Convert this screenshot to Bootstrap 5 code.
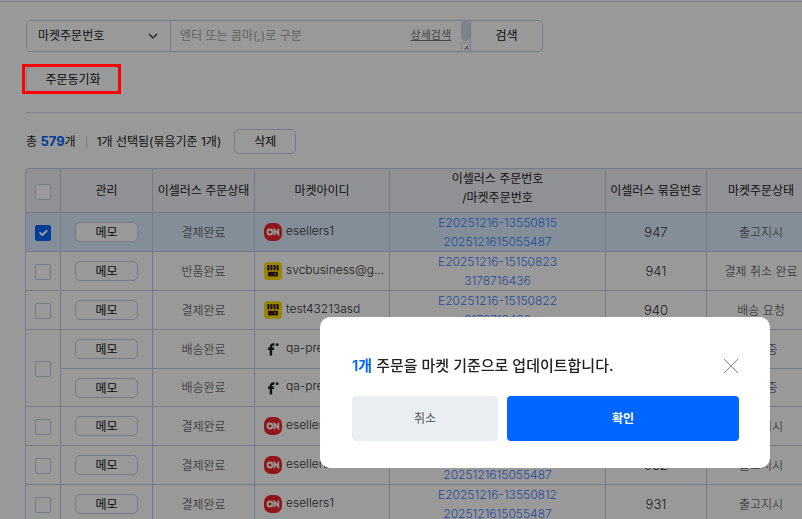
<!DOCTYPE html>
<html lang="ko">
<head>
<meta charset="utf-8">
<meta name="viewport" content="width=device-width, initial-scale=1">
<title>주문 관리</title>
<link href="https://cdn.jsdelivr.net/npm/bootstrap@5.3.0/dist/css/bootstrap.min.css" rel="stylesheet">
<style>
  :root { --line: #c3cddf; --ink: #222; --brand: #0066ff; }
  body { font-family: Inter, "Noto Sans CJK KR", sans-serif; font-size: 12px; line-height: 19px; color: var(--ink); background: #fff; }
  .top-rule { height: 2px; border-bottom: 1px solid var(--line); }
  .page { padding: 18px 0 0 26px; }
  .outline-btn { --bs-btn-font-size: 12px; --bs-btn-line-height: 18px; --bs-btn-padding-y: 0; --bs-btn-padding-x: 0; --bs-btn-color: #111; --bs-btn-bg: #fff; --bs-btn-border-color: var(--line); --bs-btn-border-radius: 5px; }

  .search-bar { width: 517px; height: 32px; border: 1px solid var(--line); border-radius: 5px; overflow: hidden; }
  .select-wrap { flex: 0 0 143px; }
  .search-bar .form-select { padding: 0 30px 0 11px; border: 0; border-radius: 0; font-size: 12px; color: var(--ink); background-image: none; }
  .select-wrap svg { position: absolute; right: 12px; top: 10px; pointer-events: none; }
  .query-wrap { border: solid var(--line); border-width: 0 1px; }
  .query-wrap textarea { height: 30px; padding: 5px 70px 5px 9px; border: 0; border-radius: 0; font-size: 12px; line-height: 19px; resize: none; overflow: hidden; }
  .query-wrap textarea::placeholder { color: #a6a6a6; }
  .detail-link { position: absolute; right: 19px; top: 5px; font-size: 11px; color: #777; }
  .scroll-thumb { position: absolute; right: 0; top: 0; width: 9px; height: 20px; border-radius: 4px; background: #cfdae8; }
  .grip { position: absolute; right: 0; bottom: 0; }
  .search-btn { flex: 0 0 71px; border: 0; border-radius: 0; }

  .sync-wrap { margin-top: 14px; }
  .sync-btn, .memo-btn { --bs-btn-line-height: 16px; display: block; padding-top: 2px; }
  .sync-btn { width: 94px; height: 26px; }
  .highlight-frame { position: absolute; inset: -2px -1px -2px -4px; border: 3px solid #f00; z-index: 1080; pointer-events: none; }
  .section-rule { margin: 20px 0 16px; border: 0; height: 1px; background: #d8dbe4; opacity: 1; }
  .count-num { color: var(--brand); font-size: 13px; }
  .divider { width: 1px; height: 12px; margin: 0 10px; background: #ccc; }
  .delete-btn { width: 62px; height: 25px; margin-left: 13px; }

  .order-wrap { margin: 14px 0 0 -1px; overflow: hidden; }
  .order-table { width: 791px; table-layout: fixed; border-collapse: separate; border-spacing: 0; text-align: center; }
  .order-table th, .order-table td { height: 39px; padding: 0; border: solid var(--line); border-width: 0 1px 1px 0; vertical-align: middle; white-space: nowrap; font-weight: 300; color: #333; }
  .order-table th { height: 45px; border-top-width: 1px; background: #f0f2f8; font-weight: 400; color: var(--ink); }
  .order-table th.two-line { padding-bottom: 5px; }
  .order-table th:first-child, .order-table .lead-cell { border-left-width: 1px; }
  .order-table th:first-child { border-top-left-radius: 5px; }
  .order-table .row-last td { height: 38px; }
  .order-table .row-on td { background: #dcedff; }
  .order-table .form-check-input { display: block; width: 16px; height: 16px; margin: 2px auto 0; border-color: var(--line); border-radius: 2px; }
  .order-table .form-check-input:checked { background-color: var(--brand); border-color: var(--brand); }
  .memo-btn { width: 63px; height: 20px; margin: 0 auto; }
  .market { display: flex; align-items: center; gap: 4px; padding: 0 9px; text-align: left; }
  .market svg { flex: none; }
  .market span { padding-bottom: 4px; }
  .order-no { color: #3a7dff; text-decoration: none; display: block; }
  .num { font-size: 13px; }

  .backdrop-dim { background: rgba(0,0,0,.4); }
  .confirm-shell { display: flex; justify-content: flex-end; align-items: flex-end; padding: 0 32px 51px; overflow: hidden; }
  .confirm-box { width: 450px; border: 0; border-radius: 10px; padding: 34px 31px 27px 32px; }
  .confirm-title { font-size: 15px; line-height: 30px; font-weight: 500; margin: 0; }
  .confirm-title span { color: var(--brand); font-weight: 600; }
  .close-x { border: 0; background: none; padding: 0; line-height: 0; }
  .confirm-actions { gap: 9px; margin-top: 15px; }
  .confirm-actions .btn { height: 45px; border: 0; border-radius: 4px; font-size: 12px; padding: 0; }
  .cancel-btn { flex: 146 1 0; background: #e9eef3; color: #555; }
  .ok-btn { flex: 232 1 0; background: var(--brand); color: #fff; font-weight: 700; }
</style>
<script src="https://cdn.jsdelivr.net/npm/bootstrap@5.3.0/dist/js/bootstrap.bundle.min.js"></script>
</head>
<body class="overflow-hidden">
<svg class="d-none" aria-hidden="true">
  <symbol id="ic-on" viewBox="0 0 18 18">
    <rect width="18" height="18" rx="7" fill="#f1262b"/>
    <circle cx="6" cy="9" r="2.5" fill="none" stroke="#fff" stroke-width="1.8"/>
    <path d="M10.500 12.300V6.900L14.300 11.100V5.700" fill="none" stroke="#fff" stroke-width="1.800"/>
  </symbol>
  <symbol id="ic-store" viewBox="0 0 18 18">
    <rect width="18" height="18" rx="4" fill="#ffe000"/>
    <path d="M3.500 3H5.500V7.300a1.200 1.200 0 0 1-2.400 0zM6.500 3H8.500V7.300a1.100 1.100 0 0 1-2.200 0zM9.500 3h2l.2 4.300a1.100 1.100 0 0 1-2.200 0zM12.500 3h2l.4 4.300a1.200 1.200 0 0 1-2.400 0z" fill="#391b1b"/>
    <path d="M4 9.800h10v4.600H4z" fill="#391b1b"/><path d="M10.500 11.500h1.600v1h-1.600z" fill="#ffe000"/>
  </symbol>
  <symbol id="ic-f" viewBox="0 0 18 18">
    <path d="M10.500 4.600C7.600 4 6.900 5.500 6.900 7.300V15.500M4 8.700h6" fill="none" stroke="#222" stroke-width="2.500"/>
    <circle cx="13.200" cy="4.700" r="1.400" fill="#222"/>
  </symbol>
</svg>

<div class="top-rule"></div>
<main class="page">
  <form class="search-bar d-flex">
    <div class="select-wrap position-relative d-flex">
      <select class="form-select" aria-label="검색 조건"><option>마켓주문번호</option></select>
      <svg width="10" height="10" viewBox="0 0 10 10" aria-hidden="true"><path d="M1 3l4 4 4-4" fill="none" stroke="#222" stroke-width="1.200"/></svg>
    </div>
    <div class="query-wrap position-relative flex-fill">
      <textarea class="form-control" rows="1" aria-label="검색어" placeholder="엔터 또는 콤마(,)로 구분"></textarea>
      <a class="detail-link" href="#">상세검색</a>
      <span class="scroll-thumb"></span>
      <svg class="grip" width="9" height="9" viewBox="0 0 9 9" aria-hidden="true"><path d="M.5 9V.5H9" fill="#fff" stroke="#ddd"/><path d="M3.500 7.500l4-4M6 7.500l1.500-1.500" stroke="#444"/></svg>
    </div>
    <button type="button" class="btn outline-btn search-btn">검색</button>
  </form>

  <div class="sync-wrap position-relative d-inline-block align-top">
    <button type="button" class="btn outline-btn sync-btn">주문동기화</button>
    <span class="highlight-frame"></span>
  </div>
  <hr class="section-rule">

  <div class="d-flex align-items-center">
    <span>총 <strong class="count-num">579</strong>개</span>
    <span class="divider"></span>
    <span>1개 선택됨(묶음기준 1개)</span>
    <button type="button" class="btn outline-btn delete-btn">삭제</button>
  </div>

  <div class="order-wrap">
    <table class="order-table">
      <colgroup><col style="width:36px"><col style="width:92px"><col style="width:102px"><col style="width:135px"><col style="width:216px"><col style="width:101px"><col style="width:109px"></colgroup>
      <thead>
        <tr>
          <th><input class="form-check-input" type="checkbox" aria-label="전체 선택"></th>
          <th>관리</th><th>이셀러스 주문상태</th><th>마켓아이디</th><th class="two-line">이셀러스 주문번호<br>/마켓주문번호</th><th>이셀러스 묶음번호</th><th>마켓주문상태</th>
        </tr>
      </thead>
      <tbody>
        <tr class="row-on">
          <td class="lead-cell"><input class="form-check-input" type="checkbox" checked aria-label="주문 947 선택"></td>
          <td><button type="button" class="btn outline-btn memo-btn">메모</button></td><td>결제완료</td>
          <td><div class="market"><svg width="18" height="18"><use href="#ic-on"/></svg><span>esellers1</span></div></td>
          <td><a class="order-no" href="#">E20251216-13550815</a><a class="order-no" href="#">2025121615055487</a></td><td class="num">947</td><td>출고지시</td>
        </tr>
        <tr>
          <td class="lead-cell"><input class="form-check-input" type="checkbox" aria-label="주문 941 선택"></td>
          <td><button type="button" class="btn outline-btn memo-btn">메모</button></td><td>반품완료</td>
          <td><div class="market"><svg width="18" height="18"><use href="#ic-store"/></svg><span>svcbusiness@g...</span></div></td>
          <td><a class="order-no" href="#">E20251216-15150823</a><a class="order-no" href="#">3178716436</a></td><td class="num">941</td><td>결제 취소 완료</td>
        </tr>
        <tr>
          <td class="lead-cell"><input class="form-check-input" type="checkbox" aria-label="주문 940 선택"></td>
          <td><button type="button" class="btn outline-btn memo-btn">메모</button></td><td>결제완료</td>
          <td><div class="market"><svg width="18" height="18"><use href="#ic-store"/></svg><span>test43213asd</span></div></td>
          <td><a class="order-no" href="#">E20251216-15150822</a><a class="order-no" href="#">3178716436</a></td><td class="num">940</td><td>배송 요청</td>
        </tr>
        <tr>
          <td class="lead-cell" rowspan="2"><input class="form-check-input" type="checkbox" aria-label="묶음 주문 선택"></td>
          <td><button type="button" class="btn outline-btn memo-btn">메모</button></td><td>배송완료</td>
          <td><div class="market"><svg width="18" height="18"><use href="#ic-f"/></svg><span>qa-premium</span></div></td>
          <td></td><td></td><td>배송중</td>
        </tr>
        <tr class="row-last">
          <td><button type="button" class="btn outline-btn memo-btn">메모</button></td><td>배송완료</td>
          <td><div class="market"><svg width="18" height="18"><use href="#ic-f"/></svg><span>qa-premium</span></div></td>
          <td></td><td></td><td>배송중</td>
        </tr>
        <tr>
          <td class="lead-cell"><input class="form-check-input" type="checkbox" aria-label="주문 선택"></td>
          <td><button type="button" class="btn outline-btn memo-btn">메모</button></td><td>결제완료</td>
          <td><div class="market"><svg width="18" height="18"><use href="#ic-on"/></svg><span>esellers1</span></div></td>
          <td></td><td></td><td>출고지시</td>
        </tr>
        <tr>
          <td class="lead-cell"><input class="form-check-input" type="checkbox" aria-label="주문 932 선택"></td>
          <td><button type="button" class="btn outline-btn memo-btn">메모</button></td><td>결제완료</td>
          <td><div class="market"><svg width="18" height="18"><use href="#ic-on"/></svg><span>esellers1</span></div></td>
          <td><a class="order-no" href="#">E20251216-13550813</a><a class="order-no" href="#">2025121615055487</a></td><td class="num">932</td><td>출고지시</td>
        </tr>
        <tr>
          <td class="lead-cell"><input class="form-check-input" type="checkbox" aria-label="주문 931 선택"></td>
          <td><button type="button" class="btn outline-btn memo-btn">메모</button></td><td>결제완료</td>
          <td><div class="market"><svg width="18" height="18"><use href="#ic-on"/></svg><span>esellers1</span></div></td>
          <td><a class="order-no" href="#">E20251216-13550812</a><a class="order-no" href="#">2025121615055487</a></td><td class="num">931</td><td>출고지시</td>
        </tr>
      </tbody>
    </table>
  </div>
</main>

<div class="modal backdrop-dim confirm-shell" role="dialog" aria-modal="true" aria-labelledby="confirmTitle">
  <div class="modal-content confirm-box">
    <div class="d-flex justify-content-between align-items-center">
      <h2 class="confirm-title" id="confirmTitle"><span>1개</span> 주문을 마켓 기준으로 업데이트합니다.</h2>
      <button type="button" class="close-x" aria-label="닫기"><svg width="16" height="16" viewBox="0 0 16 16"><path d="M1 1l14 14M15 1L1 15" stroke="#888" fill="none"/></svg></button>
    </div>
    <div class="confirm-actions d-flex">
      <button type="button" class="btn cancel-btn">취소</button>
      <button type="button" class="btn ok-btn">확인</button>
    </div>
  </div>
</div>
</body>
</html>
